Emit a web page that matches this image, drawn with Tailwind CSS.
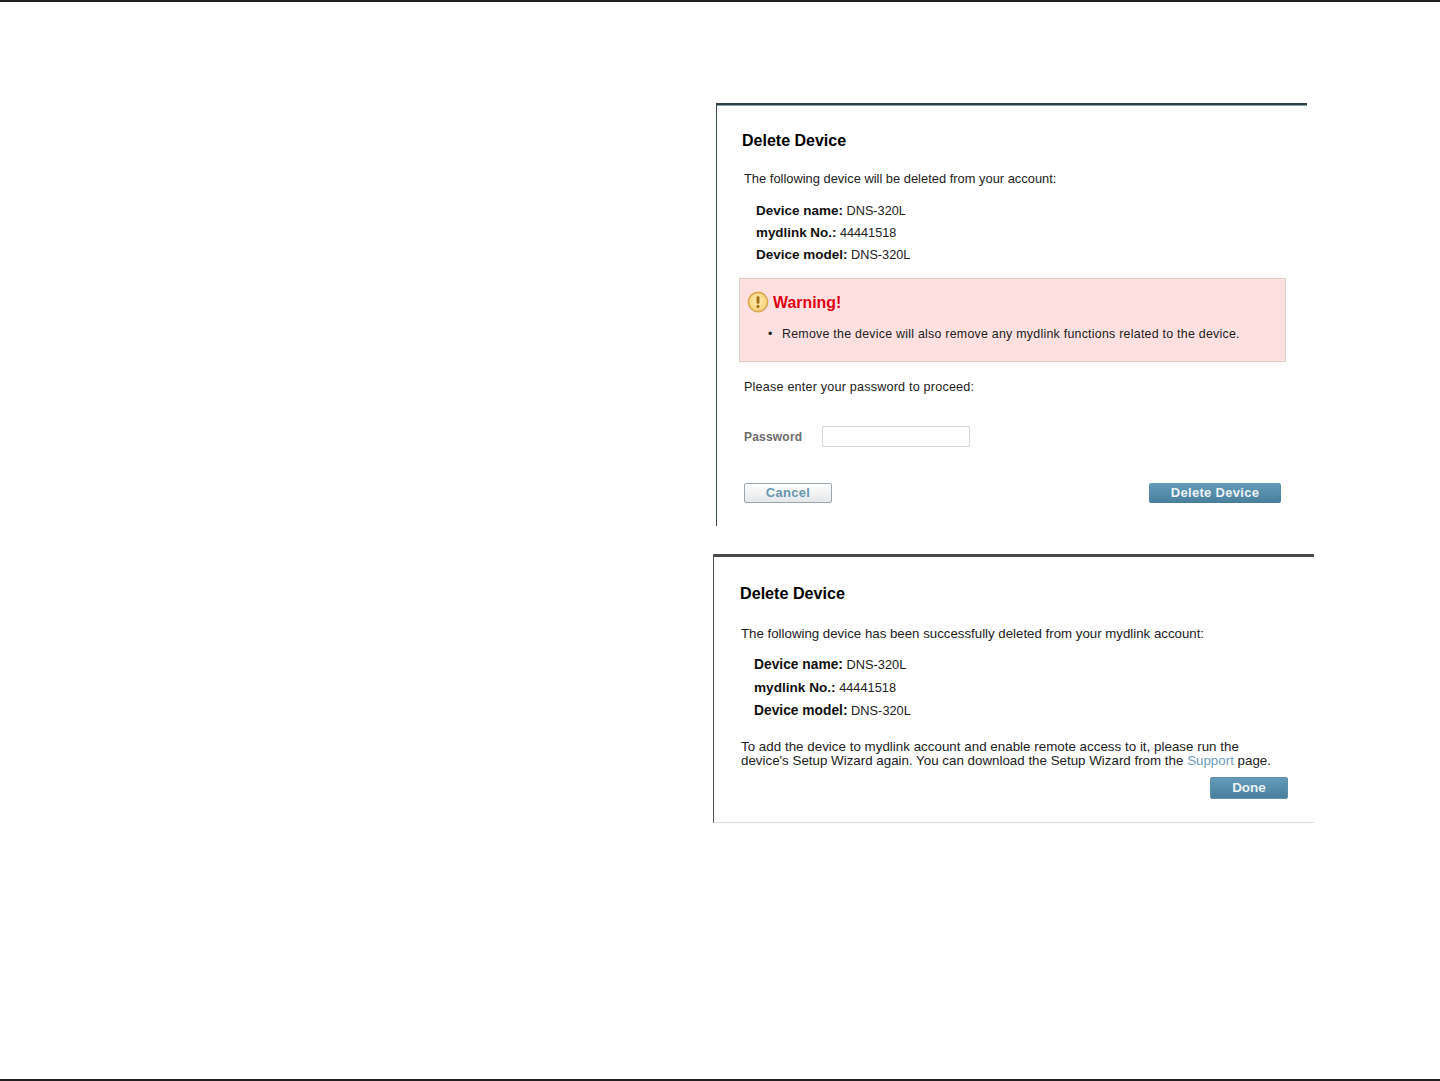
<!DOCTYPE html>
<html>

<head>
    <title>Delete Device</title>
    <meta name="viewport" content="width=device-width, initial-scale=1.0" />
    <script src="https://cdn.jsdelivr.net/npm/@tailwindcss/browser@4"></script>
</head>

<body class="bg-white font-['Liberation_Sans',Arial,sans-serif]">
    <div class="w-[1440px] h-[1081px] flex flex-col justify-between overflow-hidden">
        <div class="h-[2px] bg-[#231f20]"></div>

        <div class="flex-1 flex flex-col pl-[713px]">
            <!-- confirm panel -->
            <section class="ml-[3px] mt-[101px] w-[591px] h-[423px] border-l border-[#3a4a50] bg-[#fefefe] shadow-[inset_0_2px_0_#2f4146,inset_0_3px_0_#8aa0a8] pl-[25px] pt-[28px] text-[#222]">
                <h2 class="text-[16px] leading-[20px] font-bold text-black">Delete Device</h2>
                <p class="mt-[18px] ml-[2px] text-[12.9px] leading-[20px]">The following device will be deleted from your account:</p>
                <ul class="mt-[11px] ml-[14px] text-[12.7px] leading-[22px]">
                    <li><b class="font-bold text-[13.5px] text-[#111]">Device name:</b> DNS-320L</li>
                    <li><b class="font-bold text-[13.4px] text-[#111]">mydlink No.:</b> 44441518</li>
                    <li><b class="font-bold text-[13.5px] text-[#111]">Device model:</b> DNS-320L</li>
                </ul>
                <div class="mt-[12px] -ml-[3px] w-[547px] h-[84px] border border-[#d8cfc6] bg-[#fee0e1] pl-[7px] pt-[13px]">
                    <div class="flex items-center gap-[4px]">
                        <svg class="w-[22px] h-[22px] -mt-[2px]" viewBox="0 0 22 22">
                            <defs>
                                <radialGradient id="warnFill" cx="50%" cy="45%" r="55%">
                                    <stop offset="0%" stop-color="#fdeeb0" />
                                    <stop offset="100%" stop-color="#f8d27a" />
                                </radialGradient>
                            </defs>
                            <circle cx="11" cy="11" r="9.6" fill="url(#warnFill)" stroke="#dba94e" stroke-width="1.6" />
                            <rect x="9.5" y="5.2" width="3" height="7.6" rx="1.2" fill="#a66f1a" />
                            <circle cx="11" cy="15.4" r="1.6" fill="#a66f1a" />
                        </svg>
                        <span class="text-[15.9px] leading-[22px] font-bold text-[#e00012]">Warning!</span>
                    </div>
                    <div class="mt-[10px] ml-[21px] flex text-[12.4px] leading-[20px] tracking-[0.25px]">
                        <span class="w-[14px]">•</span>
                        <span>Remove the device will also remove any mydlink functions related to the device.</span>
                    </div>
                </div>
                <p class="mt-[15px] ml-[2px] text-[12.6px] leading-[20px] tracking-[0.2px]">Please enter your password to proceed:</p>
                <div class="mt-[29px] ml-[2px] flex items-center gap-[20px]">
                    <label class="w-[58px] text-[12px] leading-[20px] font-bold text-[#6d6d6d] tracking-[0.2px]">Password</label>
                    <input type="text" class="w-[148px] h-[21px] border border-[#d6d6de] rounded-[1px] bg-white" />
                </div>
                <div class="mt-[36px] ml-[2px] w-[537px] flex justify-between">
                    <button class="w-[88px] h-[20px] leading-[14px] border border-[#9aa6ae] rounded-[2px] bg-linear-to-b from-white to-[#e4e6e8] text-[13px] font-bold text-[#6b97b3] tracking-[0.3px]">Cancel</button>
                    <button class="w-[132px] h-[20px] rounded-[2px] bg-linear-to-b from-[#639bb8] to-[#497f9d] text-[13px] font-bold text-[#eaf3f7] tracking-[0.3px]">Delete Device</button>
                </div>
            </section>

            <!-- success panel -->
            <section class="mt-[28px] w-[601px] h-[269px] border-l border-b border-l-[#555] border-b-[#ddd] bg-[#fefefe] shadow-[inset_0_3px_0_#4a4a4a] pl-[26px] pt-[28px] text-[#222]">
                <h2 class="text-[16.15px] leading-[22px] font-bold text-black">Delete Device</h2>
                <p class="mt-[20px] ml-[1px] text-[13.28px] leading-[20px]">The following device has been successfully deleted from your mydlink account:</p>
                <ul class="mt-[9px] ml-[14px] text-[12.8px] leading-[23px]">
                    <li><b class="font-bold text-[13.8px] text-[#111]">Device name:</b> DNS-320L</li>
                    <li><b class="font-bold text-[13.6px] text-[#111]">mydlink No.:</b> 44441518</li>
                    <li><b class="font-bold text-[13.8px] text-[#111]">Device model:</b> DNS-320L</li>
                </ul>
                <p class="mt-[18px] ml-[1px] text-[13.35px] leading-[14px]"><span class="tracking-[0.02px]">To add the device to mydlink account and enable remote access to it, please run the</span><br />device's Setup Wizard again. You can download the Setup Wizard from the <a class="text-[#6f9fbd]">Support</a> page.</p>
                <div class="mt-[9px] w-[548px] flex justify-end">
                    <button class="w-[78px] h-[22px] rounded-[2px] border border-[#5f8fa9] bg-linear-to-b from-[#639bb8] to-[#497f9d] text-[13.5px] font-bold text-[#eaf3f7]">Done</button>
                </div>
            </section>
        </div>

        <div class="h-[2px] bg-[#231f20]"></div>
    </div>
</body>

</html>
